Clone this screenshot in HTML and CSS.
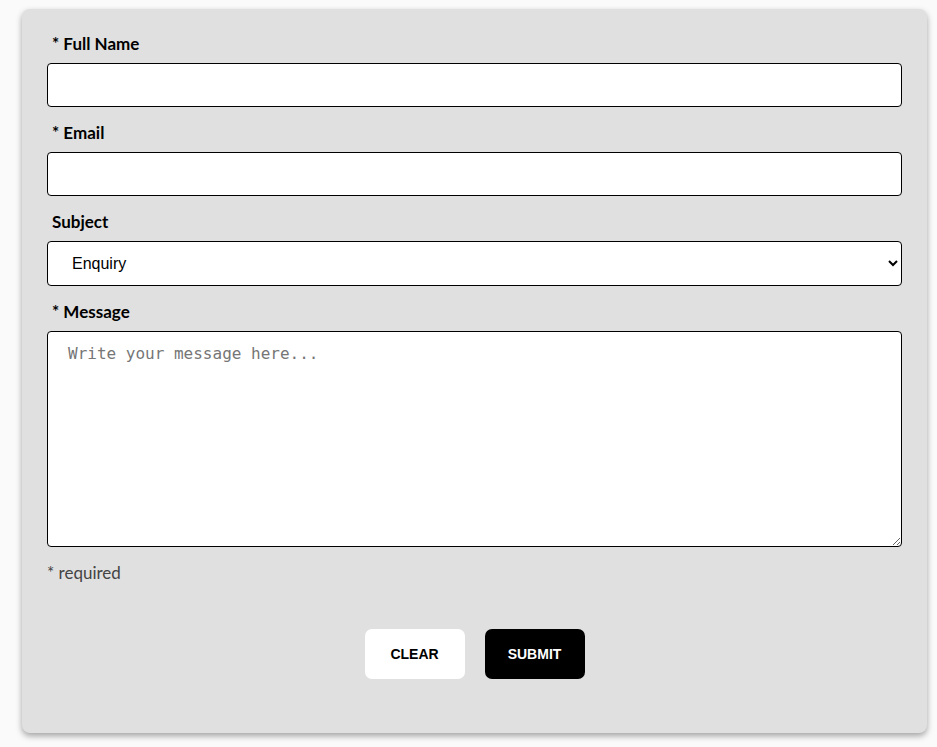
FILE: index.html
```html
<!DOCTYPE html>
<html lang="en">
<head>
<meta charset="utf-8">
<title>Contact</title>
<link rel="stylesheet" href="styles.css">
</head>
<body>
<form class="card">
  <div class="field">
    <label class="label" for="name">* Full Name</label>
    <input class="input" id="name" type="text">
  </div>
  <div class="field">
    <label class="label" for="email">* Email</label>
    <input class="input" id="email" type="email">
  </div>
  <div class="field">
    <label class="label" for="subject">Subject</label>
    <select class="input select" id="subject">
      <option>Enquiry</option>
    </select>
  </div>
  <div class="field">
    <label class="label" for="msg">* Message</label>
    <textarea class="input textarea" id="msg" placeholder="Write your message here..."></textarea>
  </div>
  <p class="note">* required</p>
  <div class="actions">
    <button type="reset" class="btn btn-light">CLEAR</button>
    <button type="submit" class="btn btn-dark">SUBMIT</button>
  </div>
</form>
</body>
</html>
```
FILE: styles.css
```css
html, body {
  margin: 0;
  padding: 0;
  background: #fafafa;
}
body {
  font-family: "Lato", "Noto Sans", sans-serif;
  padding: 9px 10px 14px 22px;
}
.card {
  background: #e0e0e0;
  border-radius: 8px;
  box-shadow: 0 3px 6px rgba(0, 0, 0, 0.35);
  padding: 25px 25px 54px 25px;
  display: flex;
  flex-direction: column;
}
.field {
  display: flex;
  flex-direction: column;
  margin-bottom: 16px;
}
.label {
  font-size: 17px;
  font-weight: 700;
  line-height: 20px;
  color: #000;
  margin: 0 0 9px 5px;
}
.input {
  box-sizing: border-box;
  height: 44px;
  border: 1px solid #000;
  border-radius: 4px;
  background: #fff;
  font-family: "Liberation Sans", Arial, sans-serif;
  font-size: 16px;
  padding: 0 20px;
  margin: 0;
}
.select {
  height: 45px;
  padding: 0 20px;
  color: #000;
}
.textarea {
  height: 216px;
  padding: 12px 20px;
  font-family: "DejaVu Sans Mono", monospace;
  font-size: 16px;
  line-height: 20px;
  resize: vertical;
}
.textarea::placeholder {
  color: #767676;
}
.note {
  margin: 0;
  font-size: 17px;
  line-height: 20px;
  color: #444;
}
.actions {
  display: flex;
  justify-content: center;
  gap: 20px;
  margin-top: 46px;
}
.btn {
  width: 100px;
  height: 50px;
  border: none;
  border-radius: 7px;
  font-family: "Liberation Sans", Arial, sans-serif;
  font-weight: 700;
  font-size: 14px;
  cursor: pointer;
}
.btn-light {
  background: #fff;
  color: #000;
}
.btn-dark {
  background: #000;
  color: #fff;
}
```
